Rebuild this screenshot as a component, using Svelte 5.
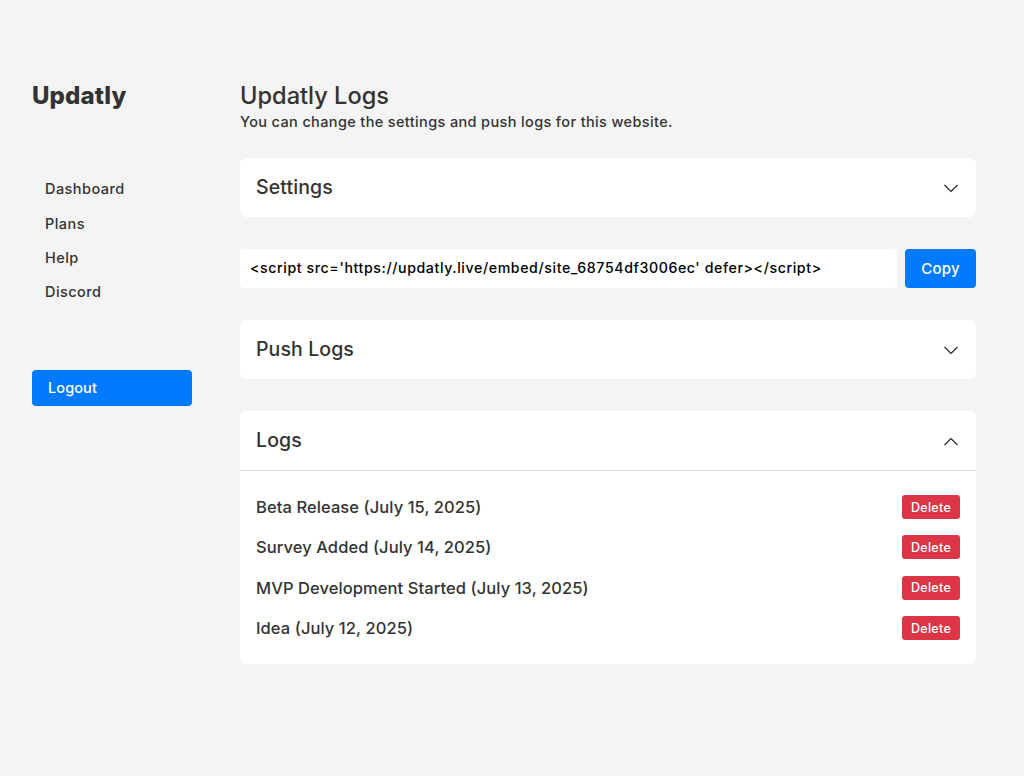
<script lang="ts">
  const navItems = ['Dashboard', 'Plans', 'Help', 'Discord'];
  const logs = [
    'Beta Release (July 15, 2025)',
    'Survey Added (July 14, 2025)',
    'MVP Development Started (July 13, 2025)',
    'Idea (July 12, 2025)'
  ];
  const embed = "<script src='https://updatly.live/embed/site_68754df3006ec' defer></" + "script>";
</script>

{#snippet chevron(up: boolean)}
  <svg class="chevron" width="16" height="16" viewBox="0 0 16 16" aria-hidden="true">
    {#if up}
      <path d="M.5 12 7 5.5 13.5 12" />
    {:else}
      <path d="M.5 5 7 11.5 13.5 5" />
    {/if}
  </svg>
{/snippet}

<div class="page">
  <aside class="sidebar">
    <div class="brand">Updatly</div>
    <nav class="nav">
      {#each navItems as item}
        <a class="nav-link" href="#top">{item}</a>
      {/each}
    </nav>
    <button class="logout">Logout</button>
  </aside>

  <main class="main">
    <h1 class="title">Updatly Logs</h1>
    <p class="subtitle">You can change the settings and push logs for this website.</p>

    <section class="card">
      <header class="card-head"><span>Settings</span>{@render chevron(false)}</header>
    </section>

    <div class="embed">
      <div class="embed-code">{embed}</div>
      <button class="copy">Copy</button>
    </div>

    <section class="card">
      <header class="card-head"><span>Push Logs</span>{@render chevron(false)}</header>
    </section>

    <section class="card">
      <header class="card-head open"><span>Logs</span>{@render chevron(true)}</header>
      <ul class="logs">
        {#each logs as log}
          <li class="log">
            <span>{log}</span>
            <button class="delete">Delete</button>
          </li>
        {/each}
      </ul>
    </section>
  </main>
</div>

<style>
  :global(body) {
    margin: 0;
    background: #f4f4f4;
  }

  .page {
    display: flex;
    gap: 48px;
    padding: 80px 48px 0 32px;
    min-height: 696px;
    font-family: Inter, "Noto Sans", sans-serif;
    color: #333;
  }

  .sidebar {
    width: 160px;
    flex: none;
  }

  .brand {
    font-size: 24px;
    line-height: 32px;
    font-weight: 800;
    letter-spacing: 0.15px;
  }

  .nav {
    display: flex;
    flex-direction: column;
    margin-top: 60.3px;
    padding-left: 13px;
  }

  .nav-link {
    font-size: 14.5px;
    line-height: 34.3px;
    font-weight: 450;
    letter-spacing: 0.45px;
    color: #333;
    text-decoration: none;
  }

  .logout {
    display: block;
    width: 100%;
    height: 36px;
    margin-top: 60.7px;
    padding: 0 16px 2px;
    border: 0;
    border-radius: 4px;
    background: #007bff;
    color: #fff;
    font: 450 14.5px Inter, "Noto Sans", sans-serif;
    letter-spacing: 0.1px;
    text-align: left;
  }

  .main {
    flex: 1;
    min-width: 0;
  }

  .title {
    margin: 0;
    font-size: 23.6px;
    line-height: 32px;
    font-weight: 450;
  }

  .subtitle {
    margin: 0 0 26px;
    font-size: 14.5px;
    line-height: 20px;
    font-weight: 500;
    letter-spacing: 0.36px;
  }

  .card {
    margin-bottom: 32px;
    border-radius: 6px;
    background: #fff;
  }

  .card-head {
    display: flex;
    align-items: center;
    justify-content: space-between;
    height: 59px;
    padding: 0 16px;
    font-size: 19.5px;
    font-weight: 450;
    letter-spacing: 0.1px;
  }

  .card-head span {
    margin-top: -2px;
  }

  .card-head.open {
    border-bottom: 1px solid #dedede;
  }

  .chevron {
    fill: none;
    stroke: #212529;
    stroke-width: 1.2;
  }

  .embed {
    display: flex;
    gap: 8px;
    height: 39px;
    margin-bottom: 32px;
  }

  .embed-code {
    flex: 1;
    display: flex;
    align-items: center;
    padding: 0 0 2px 10px;
    border-radius: 4px;
    background: #fff;
    color: #000;
    font-size: 14.2px;
    font-weight: 450;
    letter-spacing: 0.58px;
    white-space: nowrap;
    overflow: hidden;
  }

  .copy {
    width: 71px;
    border: 0;
    border-radius: 4px;
    background: #007bff;
    color: #fff;
    font: 450 15px Inter, "Noto Sans", sans-serif;
    letter-spacing: 0.2px;
  }

  .logs {
    list-style: none;
    margin: 0;
    padding: 16px 16px 16px;
  }

  .log {
    display: flex;
    align-items: center;
    justify-content: space-between;
    height: 40.33px;
    font-size: 16.5px;
    font-weight: 450;
    letter-spacing: 0.08px;
  }

  .delete {
    width: 58px;
    height: 24px;
    padding: 0;
    border: 0;
    border-radius: 3px;
    background: #dc3545;
    color: #fff;
    font: 450 12.5px Inter, "Noto Sans", sans-serif;
    letter-spacing: 0.3px;
  }
</style>
